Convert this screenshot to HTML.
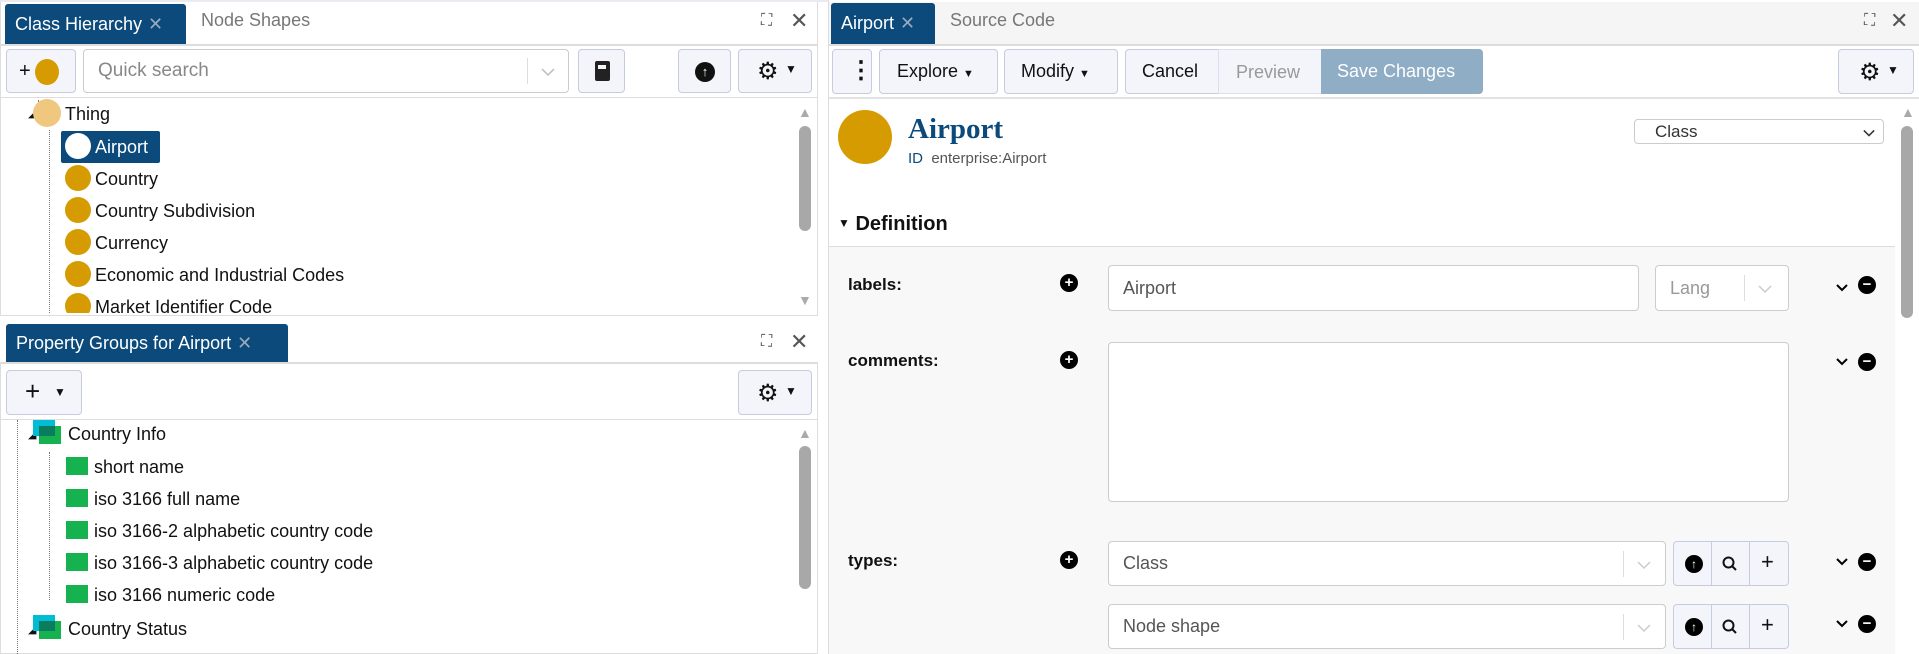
<!DOCTYPE html>
<html><head><meta charset="utf-8"><style>
*{box-sizing:border-box;margin:0;padding:0}
body{width:1919px;height:654px;overflow:hidden;background:#fff;font-family:"Liberation Sans",sans-serif;color:#111;position:relative}
.a{position:absolute}
.tab{position:absolute;background:#0b4a7b;color:#fff;font-size:18px;border-radius:3px 3px 0 0;padding-left:10px;line-height:40px}
.tab .x{color:#9ab;margin-left:6px}
.tt{color:#777;font-size:18px}
.btn{position:absolute;border:1px solid #c5cbe0;border-radius:4px;background:#f4f5fa}
.row{position:absolute;font-size:18px;line-height:30px;white-space:nowrap}
.dot{display:inline-block;width:26px;height:26px;border-radius:50%;background:#d59b00;vertical-align:middle;margin-right:4px;position:relative;top:-2px}
.sq{display:inline-block;width:22px;height:18px;background:#15b24f;vertical-align:middle;margin-right:6px;position:relative;top:-2px}
.sb{position:absolute;width:12px;border-radius:6px;background:#a8a8a8}
.lbl{position:absolute;font-weight:bold;font-size:17px}
.pc{position:absolute;width:18px;height:18px;border-radius:50%;background:#000;color:#fff;font-size:15px;line-height:18px;text-align:center;font-weight:bold}
.inp{position:absolute;background:#fff;border:1px solid #ccc;border-radius:4px;font-size:18px;color:#555;padding-left:14px}
.hdots{border-left:1px dotted #777}
.chev{position:absolute;width:14px;height:10px}
</style></head><body>

<!-- LEFT TOP PANEL -->
<div class="a" style="left:0;top:0;width:818px;height:316px;border:1px solid #ddd;border-top:none"></div>
<div class="a" style="left:0;top:0;width:1919px;height:2px;background:#e8ecf0"></div>
<div class="a" style="left:0;top:44px;width:818px;height:2px;background:#ddd"></div>
<div class="tab" style="left:5px;top:4px;width:181px;height:40px">Class Hierarchy<span class="x">✕</span></div>
<div class="a tt" style="left:201px;top:10px">Node Shapes</div>
<div class="a" style="left:761px;top:12px;font-size:16px;color:#555">⛶</div>
<div class="a" style="left:790px;top:8px;font-size:22px;color:#555">✕</div>

<div class="btn" style="left:6px;top:49px;width:70px;height:44px"><span class="a" style="left:12px;top:10px;font-size:20px">+</span><span class="a" style="left:28px;top:9px;width:24px;height:26px;border-radius:50%;background:#d59b00"></span></div>
<div class="a" style="left:83px;top:49px;width:486px;height:44px;border:1px solid #ccc;border-radius:4px;background:#fff"><span class="a" style="left:14px;top:10px;font-size:19px;color:#888">Quick search</span><span class="a" style="left:443px;top:8px;width:1px;height:26px;background:#ddd"></span><svg class="chev" style="left:457px;top:17px" viewBox="0 0 14 10"><path d="M1 2 L7 8 L13 2" fill="none" stroke="#bbb" stroke-width="1.5"/></svg></div>
<div class="btn" style="left:578px;top:49px;width:47px;height:44px"><span class="a" style="left:16px;top:11px;width:15px;height:20px;background:#222;border-radius:2px"></span><span class="a" style="left:19px;top:15px;width:8px;height:4px;background:#f4f5fa"></span></div>
<div class="btn" style="left:678px;top:49px;width:53px;height:44px"><span class="a" style="left:16px;top:12px;width:20px;height:20px;border-radius:50%;background:#111;color:#fff;font-size:13px;text-align:center;line-height:20px;font-weight:bold">↑</span></div>
<div class="btn" style="left:738px;top:49px;width:74px;height:44px"><span class="a" style="left:18px;top:7px;font-size:24px">⚙</span><span class="a" style="left:46px;top:12px;font-size:12px">▼</span></div>
<div class="a" style="left:0;top:97px;width:818px;height:1px;background:#ddd"></div>

<div class="a hdots" style="left:38px;top:100px;height:16px"></div>
<div class="a hdots" style="left:49px;top:130px;height:183px"></div>
<div class="a" style="left:28px;top:107px;font-size:11px">◢</div>
<div class="row" style="left:33px;top:99px"><span class="dot" style="background:#f0c77e;width:28px;height:28px"></span>Thing</div>
<div class="a" style="left:61px;top:131px;width:99px;height:32px;background:#0b4a7b;border-radius:2px"></div>
<div class="row" style="left:65px;top:132px;color:#fff"><span class="dot" style="background:#fff"></span>Airport</div>
<div class="row" style="left:65px;top:164px"><span class="dot"></span>Country</div>
<div class="row" style="left:65px;top:196px"><span class="dot"></span>Country Subdivision</div>
<div class="row" style="left:65px;top:228px"><span class="dot"></span>Currency</div>
<div class="row" style="left:65px;top:260px"><span class="dot"></span>Economic and Industrial Codes</div>
<div class="row" style="left:65px;top:292px;height:21px;overflow:hidden"><span class="dot"></span>Market Identifier Code</div>
<div class="a" style="left:798px;top:104px;color:#aaa;font-size:14px">▲</div>
<div class="sb" style="left:799px;top:126px;height:105px"></div>
<div class="a" style="left:798px;top:292px;color:#aaa;font-size:14px">▼</div>

<!-- LEFT BOTTOM PANEL -->
<div class="a" style="left:0;top:362px;width:818px;height:292px;border:1px solid #ddd"></div>
<div class="a" style="left:0;top:362px;width:818px;height:2px;background:#ddd"></div>
<div class="tab" style="left:6px;top:324px;width:282px;height:38px;line-height:38px">Property Groups for Airport<span class="x">✕</span></div>
<div class="a" style="left:761px;top:333px;font-size:16px;color:#555">⛶</div>
<div class="a" style="left:790px;top:329px;font-size:22px;color:#555">✕</div>
<div class="btn" style="left:6px;top:370px;width:76px;height:45px"><span class="a" style="left:18px;top:5px;font-size:26px">+</span><span class="a" style="left:47px;top:14px;font-size:12px">▼</span></div>
<div class="btn" style="left:738px;top:370px;width:74px;height:45px"><span class="a" style="left:18px;top:8px;font-size:24px">⚙</span><span class="a" style="left:46px;top:13px;font-size:12px">▼</span></div>
<div class="a" style="left:0;top:419px;width:818px;height:1px;background:#ddd"></div>
<div class="a hdots" style="left:17px;top:420px;height:234px"></div>
<div class="a hdots" style="left:49px;top:452px;height:148px"></div>
<div class="a" style="left:28px;top:428px;font-size:11px">◢</div>
<div class="row" style="left:33px;top:419px"><span style="display:inline-block;position:relative;width:30px;height:24px;vertical-align:middle;top:-3px"><span class="a" style="left:0;top:0;width:22px;height:16px;background:#00bcd4"></span><span class="a" style="left:6px;top:6px;width:22px;height:18px;background:#15b24f"></span><span class="a" style="left:6px;top:6px;width:16px;height:10px;background:#0a7d5e"></span></span> Country Info</div>
<div class="row" style="left:66px;top:452px"><span class="sq"></span>short name</div>
<div class="row" style="left:66px;top:484px"><span class="sq"></span>iso 3166 full name</div>
<div class="row" style="left:66px;top:516px"><span class="sq"></span>iso 3166-2 alphabetic country code</div>
<div class="row" style="left:66px;top:548px"><span class="sq"></span>iso 3166-3 alphabetic country code</div>
<div class="row" style="left:66px;top:580px"><span class="sq"></span>iso 3166 numeric code</div>
<div class="a" style="left:28px;top:623px;font-size:11px">◢</div>
<div class="row" style="left:33px;top:614px"><span style="display:inline-block;position:relative;width:30px;height:24px;vertical-align:middle;top:-3px"><span class="a" style="left:0;top:0;width:22px;height:16px;background:#00bcd4"></span><span class="a" style="left:6px;top:6px;width:22px;height:18px;background:#15b24f"></span><span class="a" style="left:6px;top:6px;width:16px;height:10px;background:#0a7d5e"></span></span> Country Status</div>
<div class="a" style="left:798px;top:425px;color:#aaa;font-size:14px">▲</div>
<div class="sb" style="left:799px;top:446px;height:143px"></div>

<!-- RIGHT PANEL -->
<div class="a" style="left:828px;top:0;width:1091px;height:654px;border-left:1px solid #ddd;background:#fff"></div>
<div class="a" style="left:829px;top:2px;width:1090px;height:42px;background:#f5f5f5"></div>
<div class="a" style="left:829px;top:44px;width:1090px;height:2px;background:#ddd"></div>
<div class="tab" style="left:831px;top:3px;width:104px;height:41px;padding-left:10px">Airport<span class="x">✕</span></div>
<div class="a tt" style="left:950px;top:10px">Source Code</div>
<div class="a" style="left:1864px;top:12px;font-size:16px;color:#555">⛶</div>
<div class="a" style="left:1890px;top:8px;font-size:22px;color:#555">✕</div>

<div class="btn" style="left:832px;top:49px;width:40px;height:45px"><span class="a" style="left:16px;top:6px;font-size:24px;font-weight:bold">⋮</span></div>
<div class="btn" style="left:879px;top:49px;width:119px;height:45px;font-size:18px;line-height:43px;padding-left:17px">Explore <span style="font-size:11px">▼</span></div>
<div class="btn" style="left:1004px;top:49px;width:114px;height:45px;font-size:18px;line-height:43px;padding-left:16px">Modify <span style="font-size:11px">▼</span></div>
<div class="btn" style="left:1125px;top:49px;width:94px;height:45px;font-size:18px;line-height:43px;padding-left:16px;border-radius:4px 0 0 4px">Cancel</div>
<div class="a" style="left:1218px;top:49px;width:104px;height:45px;font-size:18px;line-height:45px;padding-left:17px;color:#999;background:#f4f5fa;border:1px solid #dde">Preview</div>
<div class="a" style="left:1321px;top:49px;width:162px;height:45px;font-size:18px;line-height:45px;padding-left:16px;color:#fff;background:#90adc6;border-radius:0 4px 4px 0">Save Changes</div>
<div class="btn" style="left:1838px;top:49px;width:76px;height:45px"><span class="a" style="left:20px;top:8px;font-size:24px">⚙</span><span class="a" style="left:48px;top:13px;font-size:12px">▼</span></div>
<div class="a" style="left:829px;top:97px;width:1090px;height:2px;background:#e2e2e2"></div>

<div class="a" style="left:838px;top:110px;width:54px;height:54px;border-radius:50%;background:#d59b00"></div>
<div class="a" style="left:908px;top:113px;font-family:'Liberation Serif',serif;font-weight:bold;font-size:29px;color:#0b4a7b">Airport</div>
<div class="a" style="left:908px;top:150px;font-size:15px;color:#555"><span style="color:#0b4a7b">ID</span>&nbsp; enterprise:Airport</div>
<div class="a" style="left:1634px;top:119px;width:250px;height:25px;border:1px solid #ccc;border-radius:4px;font-size:17px;line-height:23px;padding-left:20px;color:#333">Class<svg class="chev" style="left:228px;top:8px;width:12px" viewBox="0 0 14 10"><path d="M1 2 L7 8 L13 2" fill="none" stroke="#333" stroke-width="1.8"/></svg></div>

<div class="a" style="left:838px;top:213px;font-size:20px;font-weight:bold"><span style="font-size:12px;position:relative;top:-3px">▼</span> Definition</div>
<div class="a" style="left:829px;top:246px;width:1066px;height:408px;background:#f8f8f8;border-top:1px solid #ddd"></div>

<div class="lbl" style="left:848px;top:275px">labels:</div>
<div class="pc" style="left:1060px;top:274px">+</div>
<div class="inp" style="left:1108px;top:265px;width:531px;height:46px;line-height:44px">Airport</div>
<div class="inp" style="left:1655px;top:265px;width:134px;height:46px;line-height:44px;color:#999">Lang<span class="a" style="left:88px;top:9px;width:1px;height:26px;background:#ddd"></span><svg class="chev" style="left:102px;top:18px" viewBox="0 0 14 10"><path d="M1 2 L7 8 L13 2" fill="none" stroke="#ccc" stroke-width="1.5"/></svg></div>
<svg class="chev" style="left:1835px;top:283px" viewBox="0 0 14 10"><path d="M2 2 L7 7 L12 2" fill="none" stroke="#000" stroke-width="2"/></svg>
<div class="pc" style="left:1858px;top:276px">−</div>

<div class="lbl" style="left:848px;top:351px">comments:</div>
<div class="pc" style="left:1060px;top:351px">+</div>
<div class="inp" style="left:1108px;top:342px;width:681px;height:160px"></div>
<svg class="chev" style="left:1835px;top:357px" viewBox="0 0 14 10"><path d="M2 2 L7 7 L12 2" fill="none" stroke="#000" stroke-width="2"/></svg>
<div class="pc" style="left:1858px;top:353px">−</div>

<div class="lbl" style="left:848px;top:551px">types:</div>
<div class="pc" style="left:1060px;top:551px">+</div>
<div class="inp" style="left:1108px;top:541px;width:558px;height:45px;line-height:43px">Class<span class="a" style="left:514px;top:9px;width:1px;height:26px;background:#ddd"></span><svg class="chev" style="left:528px;top:18px" viewBox="0 0 14 10"><path d="M1 2 L7 8 L13 2" fill="none" stroke="#ccc" stroke-width="1.5"/></svg></div>
<div class="btn" style="left:1673px;top:541px;width:116px;height:45px"><span class="pc" style="left:11px;top:13px;font-size:12px">↑</span><span class="a" style="left:37px;top:0;width:1px;height:44px;background:#c5cbe0"></span><svg class="a" style="left:47px;top:13px" width="18" height="18" viewBox="0 0 18 18"><circle cx="7.5" cy="7.5" r="5" fill="none" stroke="#111" stroke-width="2"/><path d="M11 11 L15 15" stroke="#111" stroke-width="2"/></svg><span class="a" style="left:75px;top:0;width:1px;height:44px;background:#c5cbe0"></span><span class="a" style="left:87px;top:7px;font-size:22px">+</span></div>
<svg class="chev" style="left:1835px;top:557px" viewBox="0 0 14 10"><path d="M2 2 L7 7 L12 2" fill="none" stroke="#000" stroke-width="2"/></svg>
<div class="pc" style="left:1858px;top:553px">−</div>

<div class="inp" style="left:1108px;top:604px;width:558px;height:45px;line-height:43px">Node shape<span class="a" style="left:514px;top:9px;width:1px;height:26px;background:#ddd"></span><svg class="chev" style="left:528px;top:18px" viewBox="0 0 14 10"><path d="M1 2 L7 8 L13 2" fill="none" stroke="#ccc" stroke-width="1.5"/></svg></div>
<div class="btn" style="left:1673px;top:604px;width:116px;height:45px"><span class="pc" style="left:11px;top:13px;font-size:12px">↑</span><span class="a" style="left:37px;top:0;width:1px;height:44px;background:#c5cbe0"></span><svg class="a" style="left:47px;top:13px" width="18" height="18" viewBox="0 0 18 18"><circle cx="7.5" cy="7.5" r="5" fill="none" stroke="#111" stroke-width="2"/><path d="M11 11 L15 15" stroke="#111" stroke-width="2"/></svg><span class="a" style="left:75px;top:0;width:1px;height:44px;background:#c5cbe0"></span><span class="a" style="left:87px;top:7px;font-size:22px">+</span></div>
<svg class="chev" style="left:1835px;top:619px" viewBox="0 0 14 10"><path d="M2 2 L7 7 L12 2" fill="none" stroke="#000" stroke-width="2"/></svg>
<div class="pc" style="left:1858px;top:615px">−</div>
<div class="a" style="left:1895px;top:99px;width:24px;height:555px;background:#fff"></div>
<div class="a" style="left:1901px;top:104px;color:#aaa;font-size:14px">▲</div>
<div class="sb" style="left:1901px;top:126px;height:192px"></div>
</body></html>
